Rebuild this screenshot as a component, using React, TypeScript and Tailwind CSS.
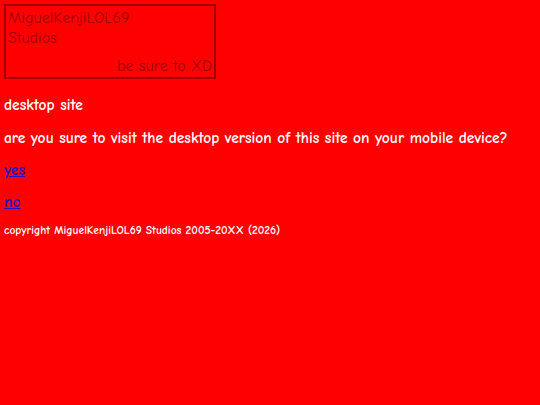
export default function App() {
  return (
    <div
      className="min-h-[405px] w-full bg-[#ff0000] p-[4px] text-white"
      style={{ fontFamily: '"Comic Sans MS", "Comic Neue", cursive, sans-serif' }}
    >
      <div className="flex h-[75px] w-[212px] flex-col border-2 border-[#a00000] px-[2px] pt-[2px] text-[16px] leading-[20px] text-[#a00000]">
        <div>MiguelKenjiLOL69</div>
        <div>Studios</div>
        <div className="mt-auto pb-[1px] text-right">be sure to XD</div>
      </div>
      <div className="mt-[16px] text-[15.5px] font-bold leading-[20px]">desktop site</div>
      <div className="mt-[13px] text-[15.5px] font-bold leading-[20px]">
        are you sure to visit the desktop version of this site on your mobile device?
      </div>
      <div className="mt-[12px] text-[15.5px] font-bold leading-[20px]">
        <a href="#" className="text-[#2a10c0] underline">yes</a>
      </div>
      <div className="mt-[12px] text-[15.5px] font-bold leading-[20px]">
        <a href="#" className="text-[#2a10c0] underline">no</a>
      </div>
      <div className="mt-[11px] text-[11.5px] font-bold leading-[16px]">
        copyright MiguelKenjiLOL69 Studios 2005-20XX (2026)
      </div>
    </div>
  );
}
